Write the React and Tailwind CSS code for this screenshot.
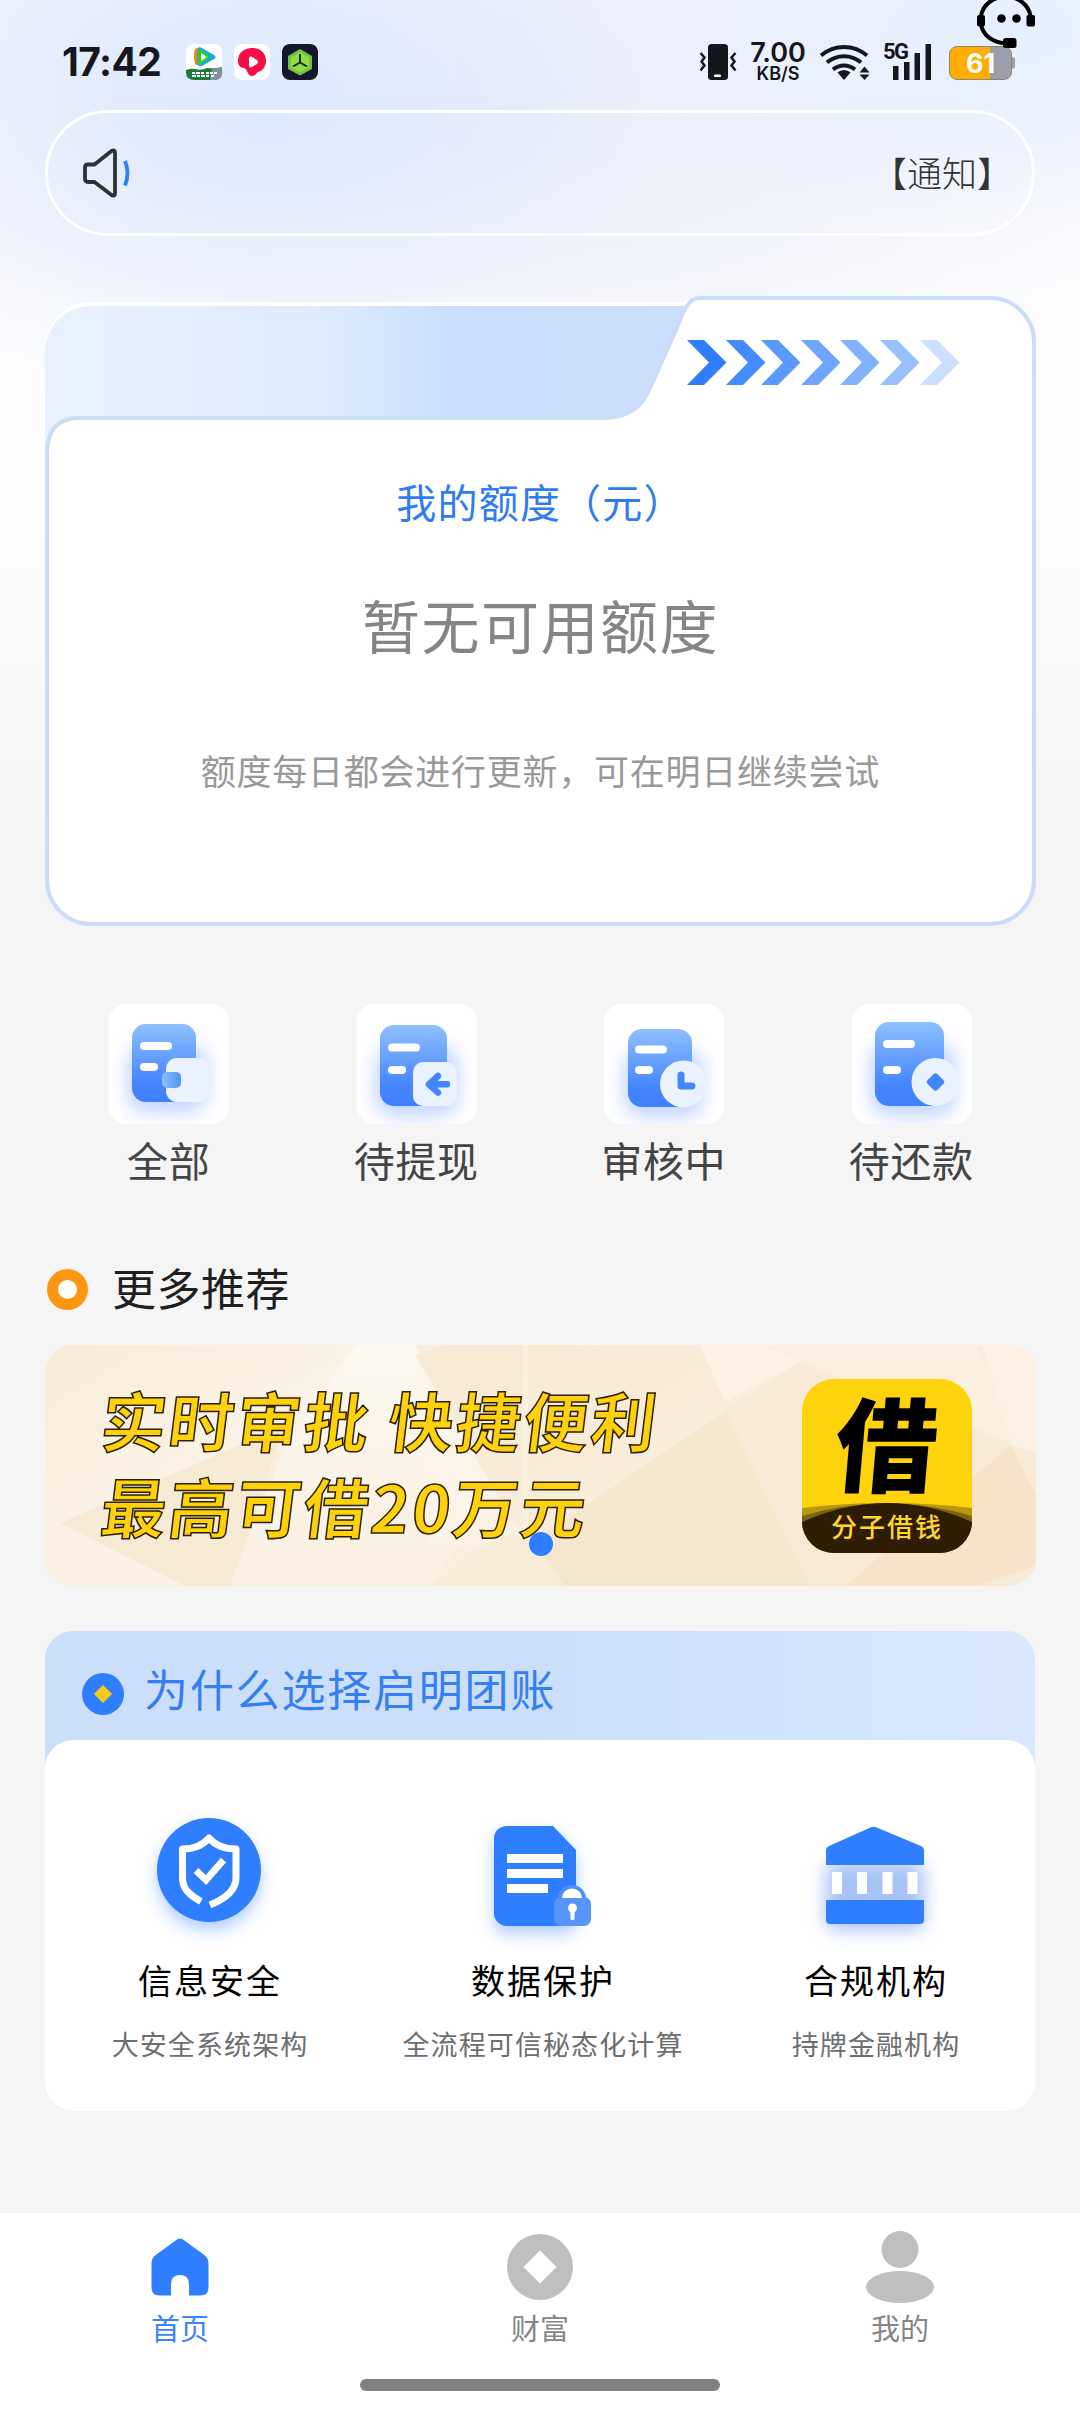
const quickItems = [
  { label: '全部', Icon: WalletDoc },
  { label: '待提现', Icon: ArrowDoc },
  { label: '审核中', Icon: ClockDoc },
  { label: '待还款', Icon: CoinDoc },
];

const reasons = [
  { title: '信息安全', desc: '大安全系统架构', Icon: ShieldIcon },
  { title: '数据保护', desc: '全流程可信秘态化计算', Icon: DataIcon },
  { title: '合规机构', desc: '持牌金融机构', Icon: BankIcon },
];

const tabs = [
  { label: '首页', Icon: HomeIcon, active: true },
  { label: '财富', Icon: WealthIcon },
  { label: '我的', Icon: MineIcon },
];

const chevrons = [
  { x: 642, color: '#2f7eff' },
  { x: 681, color: '#438bff' },
  { x: 716, color: '#5a99fe' },
  { x: 756, color: '#6fa5fd' },
  { x: 795, color: '#82b1fd' },
  { x: 835, color: '#98c0fc' },
  { x: 875, color: '#cbdffe' },
];

/* Shared gradients and shadows for the drawn icons */
function SvgDefs() {
  return (
    <svg className="absolute h-0 w-0" aria-hidden="true">
      <defs>
        <linearGradient id="docFill" x1="0" y1="0" x2="0" y2="1">
          <stop offset="0" stopColor="#8fc0fd" />
          <stop offset="0.75" stopColor="#4585ff" />
          <stop offset="1" stopColor="#4080ff" />
        </linearGradient>
        <linearGradient id="knobFill" x1="0" y1="0" x2="1" y2="0">
          <stop offset="0" stopColor="#8cc1fa" />
          <stop offset="1" stopColor="#4f92f3" />
        </linearGradient>
        <filter id="docGlow" x="-50%" y="-50%" width="200%" height="200%">
          <feGaussianBlur stdDeviation="9" />
        </filter>
        <filter id="blueGlow" x="-50%" y="-50%" width="200%" height="200%">
          <feDropShadow dx="0" dy="8" stdDeviation="8" floodColor="#2f7eff" floodOpacity="0.38" />
        </filter>
      </defs>
    </svg>
  );
}

function DocBase({ x, y, w, h, l1, l2, children }) {
  return (
    <svg viewBox="0 0 120 120" className="h-full w-full">
      <rect x={x - 5} y={y + 20} width={w + 17} height={h - 9} rx="20" fill="#8eb0ff" opacity="0.5" filter="url(#docGlow)" />
      <rect x={x} y={y} width={w} height={h} rx="14" fill="url(#docFill)" />
      <rect x="31" y={l1} width="32" height="8" rx="4" fill="#fff" />
      <rect x="31" y={l2} width="18" height="8" rx="4" fill="#fff" />
      {children}
    </svg>
  );
}

function WalletDoc() {
  return (
    <DocBase x={23} y={20} w={64} h={78} l1={38} l2={59}>
      <rect x="57" y="54" width="43" height="44" rx="11" fill="#eaf2ff" />
      <rect x="53" y="68" width="19" height="16" rx="5" fill="url(#knobFill)" />
    </DocBase>
  );
}

function ArrowDoc() {
  return (
    <DocBase x={23} y={21} w={67} h={81} l1={39.5} l2={62}>
      <rect x="56" y="58" width="44" height="44" rx="10" fill="#eaf1ff" />
      <path d="M81 72l-9 8.300 9 8.300M74 80.300h16" fill="none" stroke="#4585fb" strokeWidth="6.500" strokeLinecap="round" strokeLinejoin="round" />
      <path d="M73 80.300l8-7v14z" fill="#4585fb" />
    </DocBase>
  );
}

function ClockDoc() {
  return (
    <DocBase x={24} y={25} w={64} h={78} l1={41.5} l2={62}>
      <circle cx="79.500" cy="80" r="23.500" fill="#eaf2ff" />
      <path d="M77 71v11h11" fill="none" stroke="#4585fb" strokeWidth="7" strokeLinecap="round" strokeLinejoin="round" />
    </DocBase>
  );
}

function CoinDoc() {
  return (
    <DocBase x={23} y={18} w={69} h={84} l1={36} l2={62}>
      <circle cx="83.500" cy="78" r="24" fill="#eaf2ff" />
      <rect x="76.500" y="71" width="14" height="14" rx="3" fill="#4585fb" transform="rotate(45 83.500 78)" />
    </DocBase>
  );
}

function ShieldIcon() {
  return (
    <svg viewBox="0 0 104 104" className="mr-[2px] h-[104px] w-[104px] overflow-visible">
      <circle cx="52" cy="52" r="52" fill="#2f7eff" filter="url(#blueGlow)" />
      <g fill="none" stroke="#fff" strokeWidth="7">
        <path d="M44 83.500C31 76 25.500 70 25.500 60V31C36 31 46 27 52 20c6 7 16 11 27 11v29c0 11-9 20-26 27" strokeLinejoin="round" />
        <path d="M39 52.500l10 9.500 17.500-20" />
      </g>
    </svg>
  );
}

function DataIcon() {
  return (
    <svg viewBox="0 0 100 100" className="mb-[-4px] h-[100px] w-[100px] overflow-visible">
      <path d="M14 0h46l23 24v65a11 11 0 0 1-11 11H14A14 12 0 0 1 1 88V12A13 12 0 0 1 14 0z" fill="#2f7eff" filter="url(#blueGlow)" />
      <path d="M14 28h56v9H14zM14 43h56v9H14zM14 58h41v9H14z" fill="#fff" />
      <path d="M65 74v-1a14 14 0 0 1 28 0v1z" fill="#4c8ffc" />
      <rect x="61" y="71" width="37" height="29" rx="7" fill="#5895fb" />
      <path d="M69 72a10 9.500 0 0 1 20 0z" fill="#fff" />
      <circle cx="79.500" cy="82" r="4.500" fill="#fff" />
      <rect x="77.500" y="83" width="4" height="11" rx="1.500" fill="#fff" />
    </svg>
  );
}

function BankIcon() {
  return (
    <svg viewBox="0 0 98 98" className="mr-[2px] mb-[-2px] h-[98px] w-[98px] overflow-visible">
      <rect x="0" y="36" width="98" height="68" rx="10" fill="#4f87ee" opacity="0.5" filter="url(#docGlow)" />
      <path d="M45 1.200a6 6 0 0 1 5 0L95 20q3 1.500 3 4v15H0V24q0-2.500 3-4z" fill="#2f7eff" />
      <path d="M0 74h98v20q0 4-4 4H4q-4 0-4-4z" fill="#2f7eff" />
      <path d="M6 46h10v22H6zM31 46h10v22H31zM56.500 46h10v22h-10zM81.500 46h10v22h-10z" fill="#fff" />
    </svg>
  );
}

function HomeIcon() {
  return (
    <svg viewBox="0 0 58 58" className="h-[58px] w-[58px]">
      <path d="M26 1.500q3-2 6 0l22 16q3.500 3 3.500 8v24q0 8-8 8H38V46q0-9-9-9t-9 9v11.500H8.500q-8 0-8-8v-24q0-5 3.500-8z" fill="#2f7eff" />
    </svg>
  );
}

function WealthIcon() {
  return (
    <svg viewBox="0 0 66 66" className="h-[66px] w-[66px]">
      <circle cx="33" cy="33" r="33" fill="#bfbfbf" />
      <path d="M33 16.500L49.500 33 33 49.500 16.500 33z" fill="#fff" />
    </svg>
  );
}

function MineIcon() {
  return (
    <svg viewBox="0 0 68 72" className="h-[72px] w-[68px]">
      <circle cx="34" cy="18.500" r="18.500" fill="#bfbfbf" />
      <ellipse cx="34" cy="56" rx="34" ry="16" fill="#bfbfbf" />
    </svg>
  );
}

function StatusBar() {
  return (
    <header className="relative flex h-[110px] shrink-0 items-start justify-between pl-[62px] pr-[65px] text-[#15171c]">
      <div className="flex items-start pt-[44px]">
        <span className="w-[124px] font-[Inter] text-[39px] leading-[36px] font-bold tracking-[-0.600px]">17:42</span>
        <div className="flex gap-3">
          <svg viewBox="0 0 36 36" className="h-9 w-9">
            <rect width="36" height="36" rx="8" fill="#fff" />
            <path d="M9 5q3-2 6-1v16q-4 2-6 0-2-8 0-15z" fill="#f5821f" />
            <path d="M12 4.500q1-2 4-.5l12 7q3 2 0 4l-12 7q-3 1-4-1-2-8 0-16.500z" fill="#1aa6f0" />
            <path d="M12.500 6q1-1.500 3 0l8 6q1 1 0 2l-8 6q-2 1-3 0-1.500-7 0-14z" fill="#2bd01f" />
            <path d="M15 9l6 4-6 4z" fill="#fff" />
            <path d="M0 26q5-2 9-1 6 2 12-1 9 1 15-1v5q0 8-8 8H8q-8 0-8-8z" fill="#1f7a3c" />
            <path d="M26 25l10-2v5q0 8-8 8h-4z" fill="#7f929c" />
            <path d="M6 29h3m1 0h4m1 0h3m2 0h3m1 0h3m1 0h3M6 32h4m1 0h3m1 0h4m1 0h3m2 0h3" stroke="#fff" strokeWidth="1.800" />
          </svg>
          <svg viewBox="0 0 36 36" className="h-9 w-9">
            <rect width="36" height="36" rx="8" fill="#fff" />
            <path d="M18 4c8 0 14 5 14 13 0 6-4 10-8 11-2 1-2 4-6 4-5 0-4-7-8-8-4 0-6-3-6-7C4 9 10 4 18 4z" fill="#f90d45" />
            <path d="M15 15c0-2 1-3 3-2l5 3q2 2 0 4l-5 3c-2 1-3 0-3-2z" fill="#fff" />
          </svg>
          <svg viewBox="0 0 36 36" className="h-9 w-9">
            <rect width="36" height="36" rx="8" fill="#15182a" />
            <path d="M18 5l12 7v13l-12 6.500L6 25V12z" fill="#76c043" />
            <path d="M18 8l9 5.500v10L18 28.500 9 23.500v-10z" fill="#93d94e" />
            <path d="M18 10v8.500M18 18.500l-7 4M18 18.500l7 4" stroke="#15301a" strokeWidth="2" />
          </svg>
        </div>
      </div>

      <div className="flex items-start pt-[43px]">
        <svg viewBox="0 0 38 38" className="h-[38px] w-[38px]">
          <rect x="8" y="1" width="20" height="36" rx="3.500" fill="#15171c" />
          <rect x="14" y="31.500" width="7" height="2.500" rx="1" fill="#fff" />
          <path d="M0.500 10l4 4.500-3 4 3 4-4 5M35.500 10l-4 4.500 3 4-3 4 4 5" fill="none" stroke="#15171c" strokeWidth="2.500" />
        </svg>
        <div className="mr-px ml-[11px] flex w-[58px] flex-col items-center font-[Inter]">
          <span className="-mt-[3px] text-[27px] leading-[25px] font-semibold">7.00</span>
          <span className="text-[18px] leading-[18px] font-semibold">KB/S</span>
        </div>
        <svg viewBox="0 0 52 38" className="ml-3 h-[38px] w-[52px]">
          <g fill="none" stroke="#15171c" strokeWidth="4">
            <path d="M1 12.500a35 35 0 0 1 46 0" />
            <path d="M7 19.500a26 26 0 0 1 34 0" />
            <path d="M13 26.500a17 17 0 0 1 22 0" />
          </g>
          <path d="M24 27q4 0 6.500 2.500L24 37l-6.500-7.500Q20 27 24 27z" fill="#15171c" />
          <path d="M39.500 29.500l5-6 5 6zM39.500 31.500h10l-5 5.500z" fill="#15171c" />
        </svg>
        <div className="relative ml-[11px] h-[38px] w-12">
          <span className="absolute top-0 left-0 font-[Roboto] text-[22px] leading-[17px] font-bold tracking-[-1.500px]">5G</span>
          <svg viewBox="0 0 48 38" className="h-[38px] w-12">
            <path d="M10 23h5.500v14H10zM21 19h5.500v18H21zM31.500 10H37v27h-5.500zM42.500 1H48v36h-5.500z" fill="#15171c" />
          </svg>
        </div>
        <div className="mt-[3px] ml-[18px] flex items-center">
          <div className="flex h-[34px] w-[63px] items-center justify-center rounded-[8px] border border-[#8b8676] bg-linear-to-r from-[#ffae00] from-65% to-[#9c9fab] to-65% font-[Inter] text-[27px] leading-none font-bold text-white">
            61
          </div>
          <div className="h-3 w-[3px] rounded-r bg-[#9c9fab]" />
        </div>
      </div>

      {/* Customer service entry, floats above the battery */}
      <svg viewBox="0 0 60 50" className="absolute top-0 left-[976px] h-[50px] w-[60px]">
        <path d="M5 16A25 22.500 0 0 1 54.500 16M5 25q4 16 24 18.500" fill="none" stroke="#000" strokeWidth="4" />
        <rect x="1" y="15" width="8" height="11.500" rx="2" />
        <rect x="50.500" y="15" width="8.500" height="11.500" rx="2" />
        <circle cx="25.500" cy="18.500" r="4.300" />
        <circle cx="40.500" cy="18.500" r="4.300" />
        <rect x="27" y="38" width="13.500" height="10" rx="2.500" />
      </svg>
    </header>
  );
}

function NoticeBar() {
  return (
    <div className="mx-[45px] flex h-[126px] shrink-0 items-center justify-between rounded-full border-3 border-white pr-5 pl-[35px]">
      <svg viewBox="0 0 50 50" className="h-[50px] w-[50px]">
        <path d="M5 16.500h6.500L28.500 3q3.500-2 3.500 1.500v41q0 3.500-3.500 1.500L11.500 34H5q-3 0-3-3V19.500q0-3 3-3z" fill="none" stroke="#303133" strokeWidth="3.800" strokeLinejoin="round" />
        <path d="M42 13q5 12 0 24.500" fill="none" stroke="#2f7eff" strokeWidth="3.800" />
      </svg>
      <span className="mb-[3px] text-[35px] leading-[50px] font-light text-[#333]">【通知】</span>
    </div>
  );
}

function QuotaCard() {
  return (
    <section className="relative mx-[45px] mt-[60px] h-[630px] w-[991px] shrink-0 text-center">
      <svg viewBox="0 0 991 630" className="absolute inset-0 h-full w-full">
        <defs>
          <linearGradient id="tabBack" x1="0" y1="0" x2="1" y2="0">
            <stop offset="0" stopColor="#e9f1fe" />
            <stop offset="0.420" stopColor="#deecfe" />
            <stop offset="0.630" stopColor="#cadefd" />
            <stop offset="1" stopColor="#cbdefb" />
          </linearGradient>
        </defs>
        <path d="M0 190V52A46 46 0 0 1 46 6h600v184z" fill="#fff" />
        <path d="M0 190V56A46 46 0 0 1 46 10h600v180z" fill="url(#tabBack)" />
        <path
          d="M2 158Q2 122 34 122H558C585 122 598 110 606 90L631 34C637 18 643 2 654 2H945A44 44 0 0 1 989 46V584A44 44 0 0 1 945 628H46A44 44 0 0 1 2 584Z"
          fill="#fff"
          stroke="#cbdcf8"
          strokeWidth="4"
        />
        {chevrons.map((c) => (
          <path key={c.x} d="M0 0h17l22.500 22.500L17 45H0l22-22.500z" fill={c.color} transform={`translate(${c.x} 44)`} />
        ))}
      </svg>
      <div className="relative flex flex-col items-center pt-[175px]">
        <h2 className="text-[40px] leading-[60px] tracking-[1.200px] text-[#2f7cf0]">我的额度（元）</h2>
        <p className="mt-[53px] text-[58px] leading-[80px] tracking-[1.500px] text-[#858585]">暂无可用额度</p>
        <p className="mt-[81px] text-[35px] leading-[50px] tracking-[0.750px] text-[#999]">额度每日都会进行更新，可在明日继续尝试</p>
      </div>
    </section>
  );
}

function QuickEntries() {
  return (
    <nav className="mx-[45px] mt-[78px] grid shrink-0 grid-cols-4">
      {quickItems.map(({ label, Icon }) => (
        <div key={label} className="flex flex-col items-center">
          <div className="ml-px h-[120px] w-[120px] overflow-hidden rounded-[18px] bg-white">
            <Icon />
          </div>
          <span className="mt-[4px] mb-[2px] text-[41px] leading-[62px] tracking-[0.700px] text-[#444]">{label}</span>
        </div>
      ))}
    </nav>
  );
}

function Banner() {
  return (
    <section className="relative mx-[45px] flex h-[241px] w-[991px] shrink-0 items-center justify-between overflow-hidden rounded-[28px] bg-[#f9eedd] pr-16 pl-[57px]">
      <svg viewBox="0 0 991 241" preserveAspectRatio="none" className="absolute inset-0 h-full w-full">
        <defs>
          <linearGradient id="bnA" x1="0" y1="0" x2="1" y2="1">
            <stop offset="0" stopColor="#f8ecd8" />
            <stop offset="1" stopColor="#fcf8ef" />
          </linearGradient>
          <linearGradient id="bnC" x1="0" y1="0" x2="1" y2="1">
            <stop offset="0" stopColor="#f7e9d3" />
            <stop offset="1" stopColor="#f9eede" />
          </linearGradient>
          <linearGradient id="bnD" x1="0" y1="0" x2="0" y2="1">
            <stop offset="0" stopColor="#fcf8f0" />
            <stop offset="1" stopColor="#f9f0e0" />
          </linearGradient>
        </defs>
        <path d="M0 0h310L240 105 0 190z" fill="url(#bnA)" />
        <path d="M15 178L240 80 185 241h-45z" fill="#f6ead5" />
        <path d="M0 190l15-12 125 63H0z" fill="#faf1e3" />
        <path d="M310 0h60l85 140-70 101H185L240 100z" fill="url(#bnD)" />
        <path d="M370 10L400 0h255l35 65-208 135z" fill="url(#bnC)" />
        <path d="M370 10l112 190-100 0z" fill="#fbf5e9" opacity="0.6" />
        <path d="M482 200L690 60 770 241H520z" fill="#f5e6ce" />
        <path d="M385 241l70-50 30 0 35 50z" fill="#f7ecd8" />
        <path d="M478 0h5v190h-5z" fill="#fbf3e3" opacity="0.6" />
        <path d="M655 0h65l35 17-75 40z" fill="#fcf3e4" />
        <path d="M680 65L755 17 991 105V241H765z" fill="#f8ead7" />
        <path d="M720 0h210l61 107-236-90z" fill="#fbefe0" />
        <path d="M937 0h54v107l-25-7z" fill="#fcf1e3" />
        <path d="M800 241L966 100l25 50v71l-60 20z" fill="#f6e3ca" />
      </svg>
      <div className="relative mb-[7px] text-[65px] leading-[86px] font-bold tracking-[2.500px] whitespace-nowrap text-[#fdd10c] [-webkit-text-stroke:1.500px_#2a2000]">
        <p className="-skew-x-[7deg]">实时审批 快捷便利</p>
        <p className="-skew-x-[7deg]">最高可借20万元</p>
      </div>
      <div className="relative flex h-[174px] w-[170px] flex-col items-center rounded-[32px] bg-[#fed30c]">
        <svg viewBox="0 0 170 174" className="absolute inset-0 h-full w-full rounded-[32px]">
          <path d="M0 129Q85 119 170 129V174H0z" fill="#b8970c" />
          <path d="M0 137Q85 112 170 137V174H0z" fill="#7c640b" />
          <path d="M0 143Q85 105 170 143V174H0z" fill="#2f1d03" />
        </svg>
        <span className="relative mt-[-13px] -skew-x-[5deg] text-[102px] leading-[148px] font-black text-black">借</span>
        <span className="relative mt-[-5px] text-[26px] leading-[34px] font-medium tracking-[2px] text-[#fdd62c]">分子借钱</span>
      </div>
      {/* Carousel dot */}
      <span className="absolute bottom-[30px] left-[484px] h-6 w-6 rounded-full bg-[#2f7eff]" />
    </section>
  );
}

function WhyCard() {
  return (
    <section className="mx-[45px] mt-[45px] h-[480px] shrink-0 rounded-[28px] bg-linear-to-r from-[#cbdffb] from-50% to-[#d9e8ff]">
      <div className="flex h-[109px] items-center pt-[10px] pl-[37px]">
        <svg viewBox="0 0 42 42" className="mt-[7px] h-[42px] w-[42px]">
          <circle cx="21" cy="21" r="21" fill="#2f7eff" />
          <path d="M21 12l9 9-9 9-9-9z" fill="#f9cb16" />
        </svg>
        <h3 className="mb-[5px] ml-5 text-[44px] leading-[60px] tracking-[1.800px] text-[#3480f2]">为什么选择启明团账</h3>
      </div>
      <div className="flex h-[371px] gap-[33px] rounded-[28px] bg-white pt-[77px] pl-[15px]">
        {reasons.map(({ title, desc, Icon }) => (
          <div key={title} className="flex w-[300px] flex-col items-center">
            <div className="flex h-[109px] items-end justify-center pb-1">
              <Icon />
            </div>
            <span className="mt-[29px] text-[34px] leading-[50px] tracking-[2px] text-black">{title}</span>
            <span className="mt-[19px] text-[27px] leading-[40px] tracking-[1.100px] whitespace-nowrap text-[#6e6e6e]">{desc}</span>
          </div>
        ))}
      </div>
    </section>
  );
}

function TabBar() {
  return (
    <footer className="mt-auto flex h-[199px] shrink-0 flex-col items-center bg-white">
      <div className="grid w-full grid-cols-3">
        {tabs.map(({ label, Icon, active }) => (
          <div key={label} className="flex flex-col items-center pt-[10px]">
            <div className="flex h-[88px] items-center justify-center">
              <Icon />
            </div>
            <span className={`-mt-[2px] mb-[2px] text-[29px] leading-[36px] ${active ? 'text-[#3b84fb]' : 'text-[#858585]'}`}>{label}</span>
          </div>
        ))}
      </div>
      <div className="mt-[32px] h-3 w-[360px] rounded-full bg-[#808080]" />
    </footer>
  );
}

export default function App() {
  return (
    <div className="relative flex h-[2412px] w-[1080px] flex-col overflow-hidden bg-[#f5f5f5] font-['Noto_Sans_CJK_SC',sans-serif]">
      <SvgDefs />
      {/* Soft glow behind the top of the page */}
      <div className="absolute inset-x-0 top-0 h-[860px] bg-[radial-gradient(400px_240px_at_260px_100px,#dce9ff,transparent),radial-gradient(420px_200px_at_1000px_30px,#e5efff,transparent),radial-gradient(760px_340px_at_420px_110px,#e9ecf9,transparent),linear-gradient(#f3f5fc,#fdfdfe_42%,#fcfcfc_60%,#f5f5f5)]" />
      <div className="relative flex flex-1 flex-col">
        <StatusBar />
        <NoticeBar />
        <QuotaCard />
        <QuickEntries />
        <div className="mx-[47px] mt-[66px] mb-[26px] flex h-[61px] shrink-0 items-center">
          <span className="mt-[2px] h-[41px] w-[41px] rounded-full border-[11px] border-[#ff9611] bg-white" />
          <h3 className="mb-[4px] ml-6 text-[44px] leading-[60px] tracking-[0.500px] text-[#1f1f1f]">更多推荐</h3>
        </div>
        <Banner />
        <WhyCard />
        <TabBar />
      </div>
    </div>
  );
}
